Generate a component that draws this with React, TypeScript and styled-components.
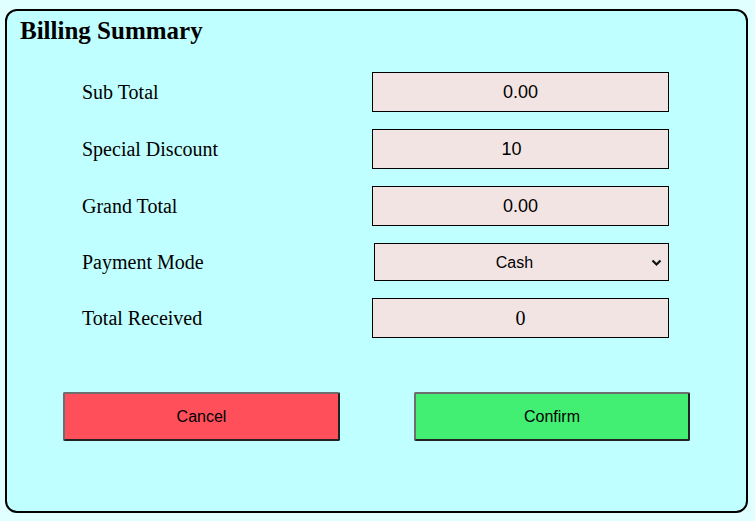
import React, { useState } from "react";
import styled, { createGlobalStyle } from "styled-components";

const GlobalStyle = createGlobalStyle`
  html, body {
    margin: 0;
    padding: 0;
    background: #e0ffff;
  }
  * { box-sizing: border-box; }
`;

const Page = styled.div`
  padding: 9px 7px 8px 5px;
  background: #e0ffff;
  min-height: 521px;
`;

const Panel = styled.section`
  height: 504px;
  border: 2px solid #000;
  border-radius: 12px;
  background: #c0ffff;
  padding: 5px 0 0 0;
  display: flex;
  flex-direction: column;
`;

const Title = styled.h2`
  margin: 0 0 0 13px;
  font-family: "Liberation Serif", "Times New Roman", serif;
  font-weight: bold;
  font-size: 25px;
  line-height: 30px;
  color: #000;
`;

const Form = styled.div`
  margin-top: 26px;
  padding-left: 75px;
  display: flex;
  flex-direction: column;
  gap: 17px;
`;

const Row = styled.div`
  display: grid;
  grid-template-columns: 290px 297px;
  align-items: center;
`;

const Label = styled.label`
  font-family: "Liberation Serif", "Times New Roman", serif;
  font-size: 20px;
  color: #000;
`;

const Field = styled.input<{ $serif?: boolean }>`
  width: 297px;
  height: 40px;
  border: 1px solid #000;
  border-radius: 0;
  background: #f3e4e4;
  text-align: center;
  font-family: ${(p) =>
    p.$serif
      ? `"Liberation Serif", "Times New Roman", serif`
      : `"Liberation Sans", Arial, sans-serif`};
  font-size: ${(p) => (p.$serif ? "20px" : "18px")};
  color: #000;
  padding: 0;
  outline: none;
`;

const NumberField = styled(Field)`
  padding-right: 18px;
  -moz-appearance: textfield;
  &::-webkit-inner-spin-button,
  &::-webkit-outer-spin-button {
    -webkit-appearance: none;
    margin: 0;
  }
`;

const SelectWrap = styled.div`
  position: relative;
  justify-self: end;
  width: 295px;
  height: 38px;
`;

const Select = styled.select`
  appearance: none;
  -webkit-appearance: none;
  width: 100%;
  height: 100%;
  border: 1px solid #000;
  border-radius: 0;
  background-color: #f3e4e4;
  text-align: center;
  text-align-last: center;
  padding: 0 14px 0 0;
  font-family: "Liberation Sans", Arial, sans-serif;
  font-size: 16px;
  color: #000;
  outline: none;
`;

const Chevron = styled.svg`
  position: absolute;
  right: 7px;
  top: 16px;
  width: 11px;
  height: 8px;
  pointer-events: none;
`;

const Actions = styled.div`
  margin-top: 54px;
  padding-left: 56px;
  display: flex;
  gap: 74px;
`;

const ActionButton = styled.button<{ $tone: "cancel" | "confirm"; $w: number }>`
  width: ${(p) => p.$w}px;
  height: 49px;
  border: 2px solid;
  border-color: #6e6e6e #222 #222 #6e6e6e;
  border-radius: 2px;
  background: ${(p) => (p.$tone === "cancel" ? "#ff4f5a" : "#42ef72")};
  font-family: "Liberation Sans", Arial, sans-serif;
  font-size: 16px;
  color: #000;
  cursor: pointer;
`;

export default function App() {
  const [mode, setMode] = useState("Cash");
  return (
    <>
      <GlobalStyle />
      <Page>
        <Panel>
          <Title>Billing Summary</Title>
          <Form>
            <Row>
              <Label>Sub Total</Label>
              <Field readOnly value="0.00" />
            </Row>
            <Row>
              <Label>Special Discount</Label>
              <NumberField type="number" defaultValue="10" />
            </Row>
            <Row>
              <Label>Grand Total</Label>
              <Field readOnly value="0.00" />
            </Row>
            <Row>
              <Label>Payment Mode</Label>
              <SelectWrap>
                <Select value={mode} onChange={(e) => setMode(e.target.value)}>
                  <option>Cash</option>
                  <option>Card</option>
                  <option>UPI</option>
                </Select>
                <Chevron viewBox="0 0 11 8" aria-hidden="true">
                  <path d="M1.5 1.5 L5.5 5.5 L9.5 1.5" fill="none" stroke="#111" strokeWidth="2.2" />
                </Chevron>
              </SelectWrap>
            </Row>
            <Row>
              <Label>Total Received</Label>
              <Field $serif defaultValue="0" />
            </Row>
          </Form>
          <Actions>
            <ActionButton $tone="cancel" $w={277}>Cancel</ActionButton>
            <ActionButton $tone="confirm" $w={276}>Confirm</ActionButton>
          </Actions>
        </Panel>
      </Page>
    </>
  );
}
